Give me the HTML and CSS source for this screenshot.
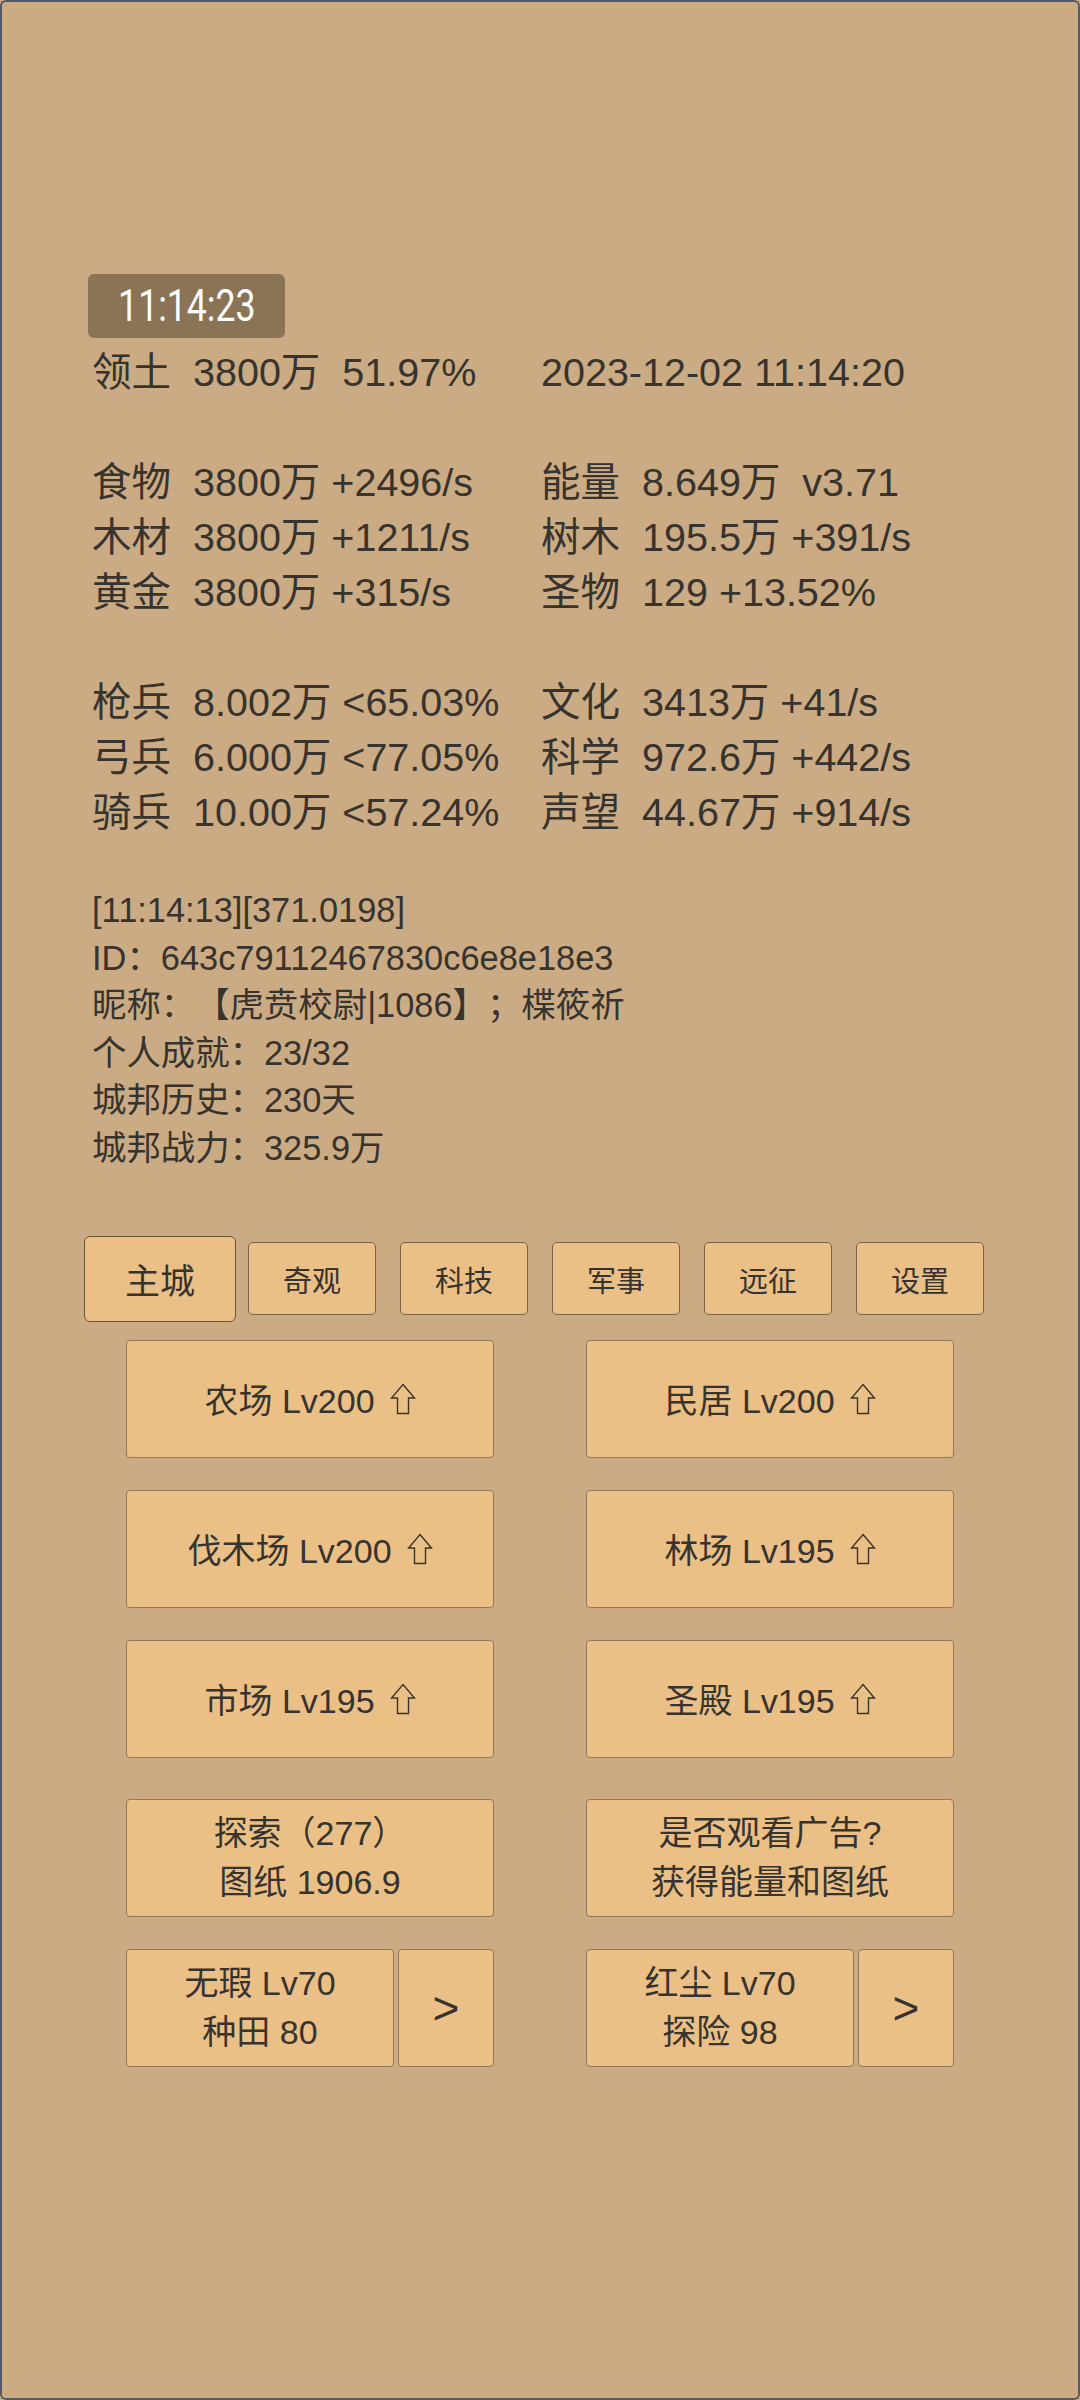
FILE: index.html
```html
<!DOCTYPE html>
<html lang="zh">

<head>
    <meta charset="UTF-8">
    <meta name="viewport" content="width=device-width, initial-scale=1.0">
    <title>城邦</title>
    <link rel="stylesheet" href="styles.css">
</head>

<body>
    <div class="screen">

        <div class="clock"><span>11:14:23</span></div>

        <div class="stats">
            <div class="row">
                <span><i class="k">领土</i>3800万&nbsp;&nbsp;51.97%</span>
                <span>2023-12-02 11:14:20</span>
            </div>

            <div class="row gap">
                <span><i class="k">食物</i>3800万 +2496/s</span>
                <span><i class="k">能量</i>8.649万&nbsp;&nbsp;v3.71</span>
            </div>
            <div class="row">
                <span><i class="k">木材</i>3800万 +1211/s</span>
                <span><i class="k">树木</i>195.5万 +391/s</span>
            </div>
            <div class="row">
                <span><i class="k">黄金</i>3800万 +315/s</span>
                <span><i class="k">圣物</i>129 +13.52%</span>
            </div>

            <div class="row gap">
                <span><i class="k">枪兵</i>8.002万 &lt;65.03%</span>
                <span><i class="k">文化</i>3413万 +41/s</span>
            </div>
            <div class="row">
                <span><i class="k">弓兵</i>6.000万 &lt;77.05%</span>
                <span><i class="k">科学</i>972.6万 +442/s</span>
            </div>
            <div class="row">
                <span><i class="k">骑兵</i>10.00万 &lt;57.24%</span>
                <span><i class="k">声望</i>44.67万 +914/s</span>
            </div>
        </div>

        <div class="info">
            <p>[11:14:13][371.0198]</p>
            <p>ID：643c79112467830c6e8e18e3</p>
            <p>昵称：【虎贲校尉|1086】；楪筱祈</p>
            <p>个人成就：23/32</p>
            <p>城邦历史：230天</p>
            <p>城邦战力：325.9万</p>
        </div>

        <ul class="tabs">
            <li><span class="tab on">主城</span></li>
            <li><span class="tab">奇观</span></li>
            <li><span class="tab">科技</span></li>
            <li><span class="tab">军事</span></li>
            <li><span class="tab">远征</span></li>
            <li><span class="tab">设置</span></li>
        </ul>

        <div class="builds">
            <div class="btn">农场 Lv200<svg class="up" viewBox="0 0 26 32"><path d="M13 1.5 L24.5 15 H18.5 V30.5 H7.5 V15 H1.5 Z" /></svg></div>
            <div class="btn">民居 Lv200<svg class="up" viewBox="0 0 26 32"><path d="M13 1.5 L24.5 15 H18.5 V30.5 H7.5 V15 H1.5 Z" /></svg></div>
            <div class="btn">伐木场 Lv200<svg class="up" viewBox="0 0 26 32"><path d="M13 1.5 L24.5 15 H18.5 V30.5 H7.5 V15 H1.5 Z" /></svg></div>
            <div class="btn">林场 Lv195<svg class="up" viewBox="0 0 26 32"><path d="M13 1.5 L24.5 15 H18.5 V30.5 H7.5 V15 H1.5 Z" /></svg></div>
            <div class="btn">市场 Lv195<svg class="up" viewBox="0 0 26 32"><path d="M13 1.5 L24.5 15 H18.5 V30.5 H7.5 V15 H1.5 Z" /></svg></div>
            <div class="btn">圣殿 Lv195<svg class="up" viewBox="0 0 26 32"><path d="M13 1.5 L24.5 15 H18.5 V30.5 H7.5 V15 H1.5 Z" /></svg></div>

            <div class="btn two more">探索（277）<br>图纸 1906.9</div>
            <div class="btn two more">是否观看广告?<br>获得能量和图纸</div>

            <div class="hero">
                <div class="btn two">无瑕 Lv70<br>种田 80</div>
                <div class="btn next">&gt;</div>
            </div>
            <div class="hero">
                <div class="btn two">红尘 Lv70<br>探险 98</div>
                <div class="btn next">&gt;</div>
            </div>
        </div>

    </div>
</body>

</html>
```

FILE: styles.css
```css
* {
    margin: 0;
    padding: 0;
}

ul,
ol {
    list-style: none;
}

body {
    background: #cbab83;
    font-family: "Liberation Sans", "Noto Sans CJK SC", sans-serif;
    color: #37332e;
    text-spacing-trim: space-all;
}

.screen {
    width: 1080px;
    height: 2400px;
    box-sizing: border-box;
    border: 2px solid #4d5872;
    border-right-color: #5a5a5e;
    border-bottom-color: #5a5a5e;
    border-radius: 6px;
    background: #cbab83;
    overflow: hidden;
}

.clock {
    width: 197px;
    height: 64px;
    margin: 272px 0 0 86px;
    background: #8b7356;
    border-radius: 6px;
    display: flex;
    align-items: center;
    justify-content: center;
}

.clock span {
    display: inline-block;
    font-family: Roboto, "Noto Sans", sans-serif;
    font-size: 44px;
    color: #fff;
    transform: scaleX(0.81);
    line-height: 1;
}

.stats {
    margin-top: 7px;
    padding-left: 90px;
    font-size: 39.5px;
    line-height: 55px;
}

.stats .row {
    display: grid;
    grid-template-columns: 449px 1fr;
    white-space: nowrap;
}

.stats .gap {
    margin-top: 55px;
}

.k {
    font-style: normal;
    display: inline-block;
    width: 101px;
}

.info {
    margin-top: 47px;
    padding-left: 90px;
    font-size: 34.4px;
    line-height: 47.6px;
    white-space: nowrap;
}

.tabs {
    margin-top: 63px;
    padding: 0 82px;
    height: 86px;
    display: grid;
    grid-template-columns: repeat(6, 152px);
    align-items: center;
}

.tabs li {
    display: flex;
    justify-content: center;
}

.tab {
    width: 128px;
    height: 73px;
    box-sizing: border-box;
    border: 1.5px solid #7a6346;
    border-radius: 5px;
    background: #eac087;
    font-size: 29px;
    display: flex;
    align-items: center;
    justify-content: center;
}

.tab.on {
    width: 153px;
    height: 86px;
    border-color: #6b5538;
    border-radius: 6px;
    font-size: 35px;
}

.builds {
    margin-top: 18px;
    padding-left: 124px;
    display: grid;
    grid-template-columns: 368px 368px;
    column-gap: 92px;
    row-gap: 32px;
}

.btn {
    height: 118px;
    box-sizing: border-box;
    border: 1px solid #93775a;
    border-radius: 4px;
    background: #eac087;
    font-size: 34px;
    display: flex;
    align-items: center;
    justify-content: center;
    text-align: center;
    white-space: nowrap;
}

.btn.two {
    line-height: 48.5px;
}

.more {
    margin-top: 9px;
}

.up {
    width: 26px;
    height: 32px;
    margin-left: 15px;
    fill: none;
    stroke: #3a332a;
    stroke-width: 1.4;
}

.hero {
    display: flex;
    gap: 4px;
}

.hero .two {
    flex: 1;
}

.hero .next {
    width: 96px;
    font-size: 46px;
}
```
